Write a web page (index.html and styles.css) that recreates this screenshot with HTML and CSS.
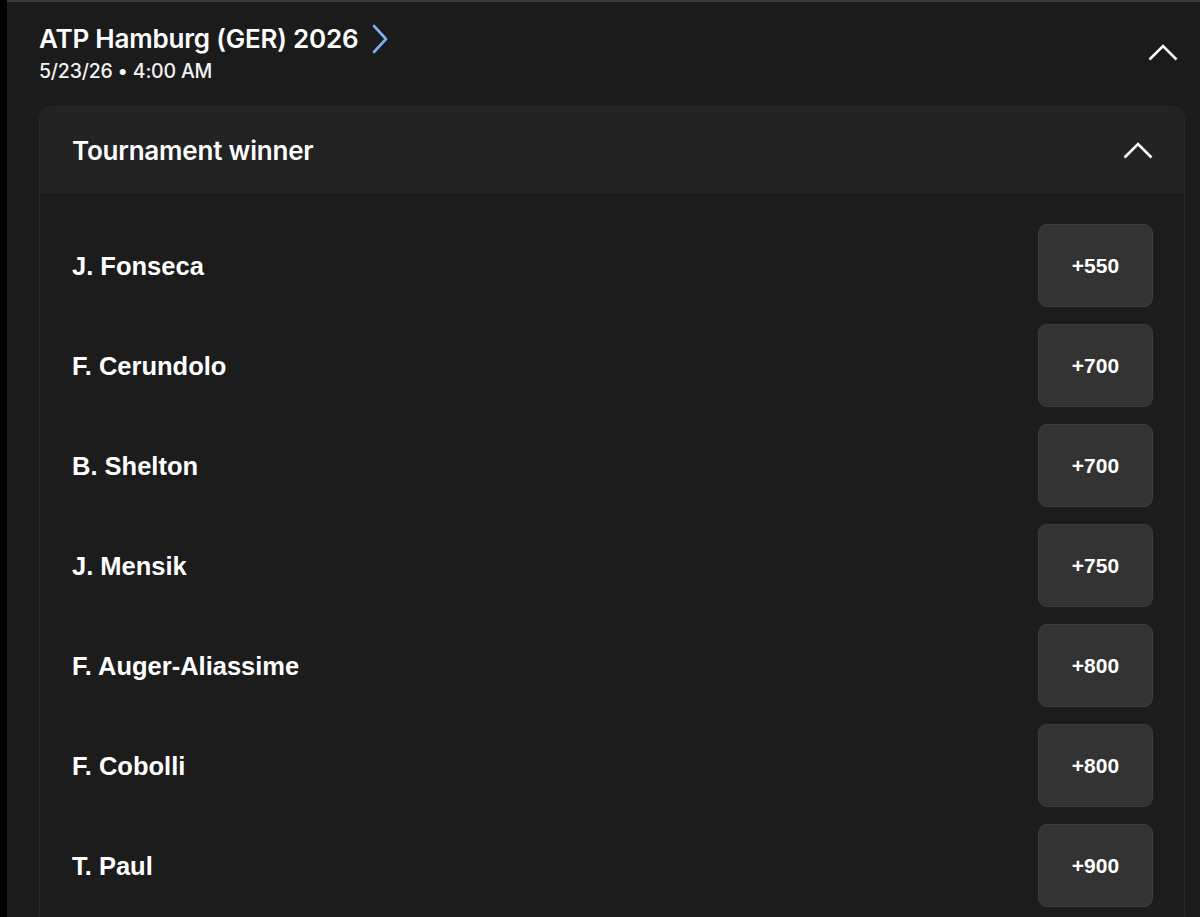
FILE: index.html
```html
<!DOCTYPE html>
<html>
<head>
<meta charset="utf-8">
<link rel="stylesheet" href="styles.css">
</head>
<body>
<div class="rail"></div>
<div class="main">
  <div class="event-head">
    <div class="event-info">
      <div class="event-title">ATP Hamburg (GER) 2026
        <svg class="chev-right" width="16" height="30" viewBox="0 0 16 30"><path d="M2 2 L14 15 L2 28" fill="none" stroke="#7eaef0" stroke-width="2.6" stroke-linecap="round" stroke-linejoin="round"/></svg>
      </div>
      <div class="event-date">5/23/26 • 4:00 AM</div>
    </div>
    <svg class="chev-up" width="30" height="18" viewBox="0 0 30 18"><path d="M1.5 16.5 L15 3 L28.5 16.5" fill="none" stroke="#fff" stroke-width="2.6"/></svg>
  </div>
  <div class="card">
    <div class="card-head">
      <div class="card-title">Tournament winner</div>
      <svg class="chev-up" width="30" height="18" viewBox="0 0 30 18"><path d="M1.5 16.5 L15 3 L28.5 16.5" fill="none" stroke="#fff" stroke-width="2.6"/></svg>
    </div>
    <div class="card-body">
      <div class="row"><span class="name">J. Fonseca</span><button class="odds">+550</button></div>
      <div class="row"><span class="name">F. Cerundolo</span><button class="odds">+700</button></div>
      <div class="row"><span class="name">B. Shelton</span><button class="odds">+700</button></div>
      <div class="row"><span class="name">J. Mensik</span><button class="odds">+750</button></div>
      <div class="row"><span class="name">F. Auger-Aliassime</span><button class="odds">+800</button></div>
      <div class="row"><span class="name">F. Cobolli</span><button class="odds">+800</button></div>
      <div class="row"><span class="name">T. Paul</span><button class="odds">+900</button></div>
    </div>
  </div>
</div>
</body>
</html>
```
FILE: styles.css
```css
html, body {
  margin: 0;
  padding: 0;
  height: 917px;
  overflow: hidden;
  background: #1b1b1b;
}
body {
  display: flex;
  font-family: Inter, "Liberation Sans", sans-serif;
  color: #fff;
}
.rail {
  width: 7px;
  flex: none;
  background: #000;
}
.main {
  flex: 1;
  border-top: 2px solid #3a3a3a;
  padding: 0 15px 0 32px;
  background: #1b1b1b;
}
.event-head {
  display: flex;
  justify-content: space-between;
  align-items: center;
  padding: 14px 7px 0 0;
  height: 72px;
  box-sizing: content-box;
}
.event-title {
  display: flex;
  align-items: center;
  gap: 14px;
  font-size: 26px;
  font-weight: 600;
  line-height: 32px;
  letter-spacing: -0.2px;
}
.event-date {
  font-size: 19.5px;
  font-weight: 500;
  line-height: 22px;
  margin-top: 5px;
  color: #f2f2f2;
  letter-spacing: -0.2px;
}
.chev-up {
  display: block;
  flex: none;
}
.card {
  margin-top: 18px;
  border: 1px solid #272727;
  border-radius: 12px;
  overflow: hidden;
  background: #1c1c1c;
}
.card-head {
  height: 86px;
  background: #232323;
  display: flex;
  align-items: center;
  justify-content: space-between;
  padding: 0 31px 0 32px;
}
.card-title {
  font-size: 26px;
  font-weight: 600;
  letter-spacing: -0.2px;
}
.card-body {
  padding: 31px 31px 20px 32px;
  display: flex;
  flex-direction: column;
  gap: 17px;
}
.row {
  display: flex;
  align-items: center;
  justify-content: space-between;
  height: 83px;
}
.name {
  font-family: "Liberation Sans", Arial, sans-serif;
  font-weight: 700;
  font-size: 25.5px;
  padding-top: 2px;
}
.odds {
  width: 115px;
  height: 83px;
  border-radius: 9px;
  border: 1px solid #3d3d3d;
  background: #333;
  color: #fff;
  font-family: "Liberation Sans", Arial, sans-serif;
  font-weight: 700;
  font-size: 21px;
  padding: 0;
}
```
